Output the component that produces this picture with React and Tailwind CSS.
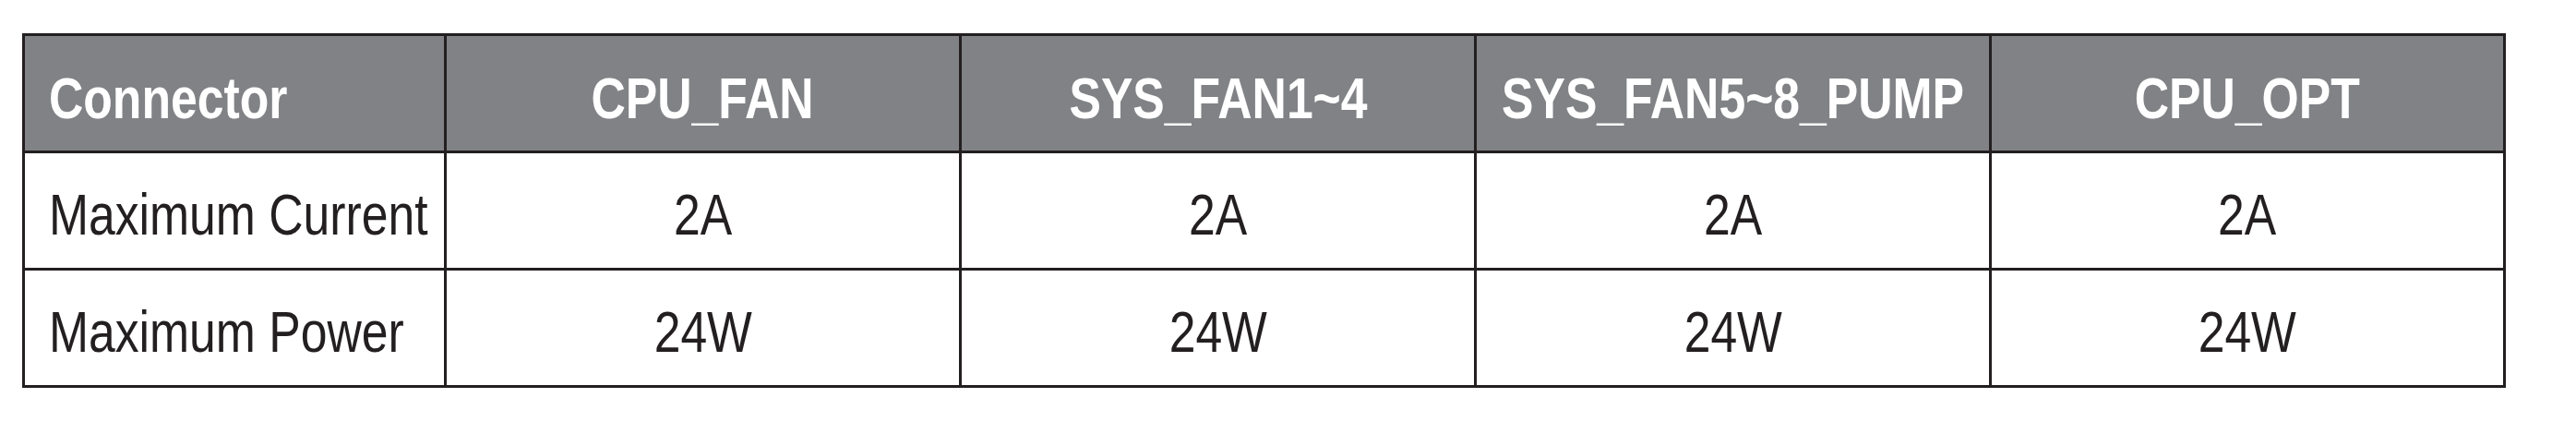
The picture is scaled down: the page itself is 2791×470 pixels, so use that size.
import React from "react";

const columns = ["CPU_FAN", "SYS_FAN1~4", "SYS_FAN5~8_PUMP", "CPU_OPT"];

const rows = [
  { label: "Maximum Current", values: ["2A", "2A", "2A", "2A"] },
  { label: "Maximum Power", values: ["24W", "24W", "24W", "24W"] },
];

// Helvetica Condensed look: Liberation Sans squeezed horizontally
function Narrow({ children, left }) {
  return (
    <span
      className={`inline-block whitespace-nowrap scale-x-[0.82] ${left ? "origin-left" : "origin-center"}`}
    >
      {children}
    </span>
  );
}

export default function App() {
  return (
    <div className="min-h-[470px] w-[2791px] bg-white pt-[36px] pl-[24px] font-['Liberation_Sans',Arial,sans-serif]">
      <div className="w-[2691px] border-[3px] border-[#231f20]">
        {/* header */}
        <div className="grid grid-cols-[454px_558px_558px_558px_557px] h-[124px] bg-[#818285] text-white font-bold text-[63px] leading-none">
          <div className="flex items-center pl-[26px] pt-[10px]">
            <Narrow left>Connector</Narrow>
          </div>
          {columns.map((col) => (
            <div
              key={col}
              className="flex items-center justify-center border-l-[3px] border-[#231f20] pt-[10px]"
            >
              <Narrow>{col}</Narrow>
            </div>
          ))}
        </div>

        {rows.map((row) => (
          <div
            key={row.label}
            className="grid grid-cols-[454px_558px_558px_558px_557px] h-[127px] border-t-[3px] border-[#231f20] text-[#231f20] text-[63px] leading-none"
          >
            <div className="flex items-center pl-[26px] pt-[9px]">
              <Narrow left>{row.label}</Narrow>
            </div>
            {row.values.map((value, index) => (
              <div
                key={`${row.label}-${index}`}
                className="flex items-center justify-center border-l-[3px] border-[#231f20] pt-[9px]"
              >
                <Narrow>{value}</Narrow>
              </div>
            ))}
          </div>
        ))}
      </div>
    </div>
  );
}
